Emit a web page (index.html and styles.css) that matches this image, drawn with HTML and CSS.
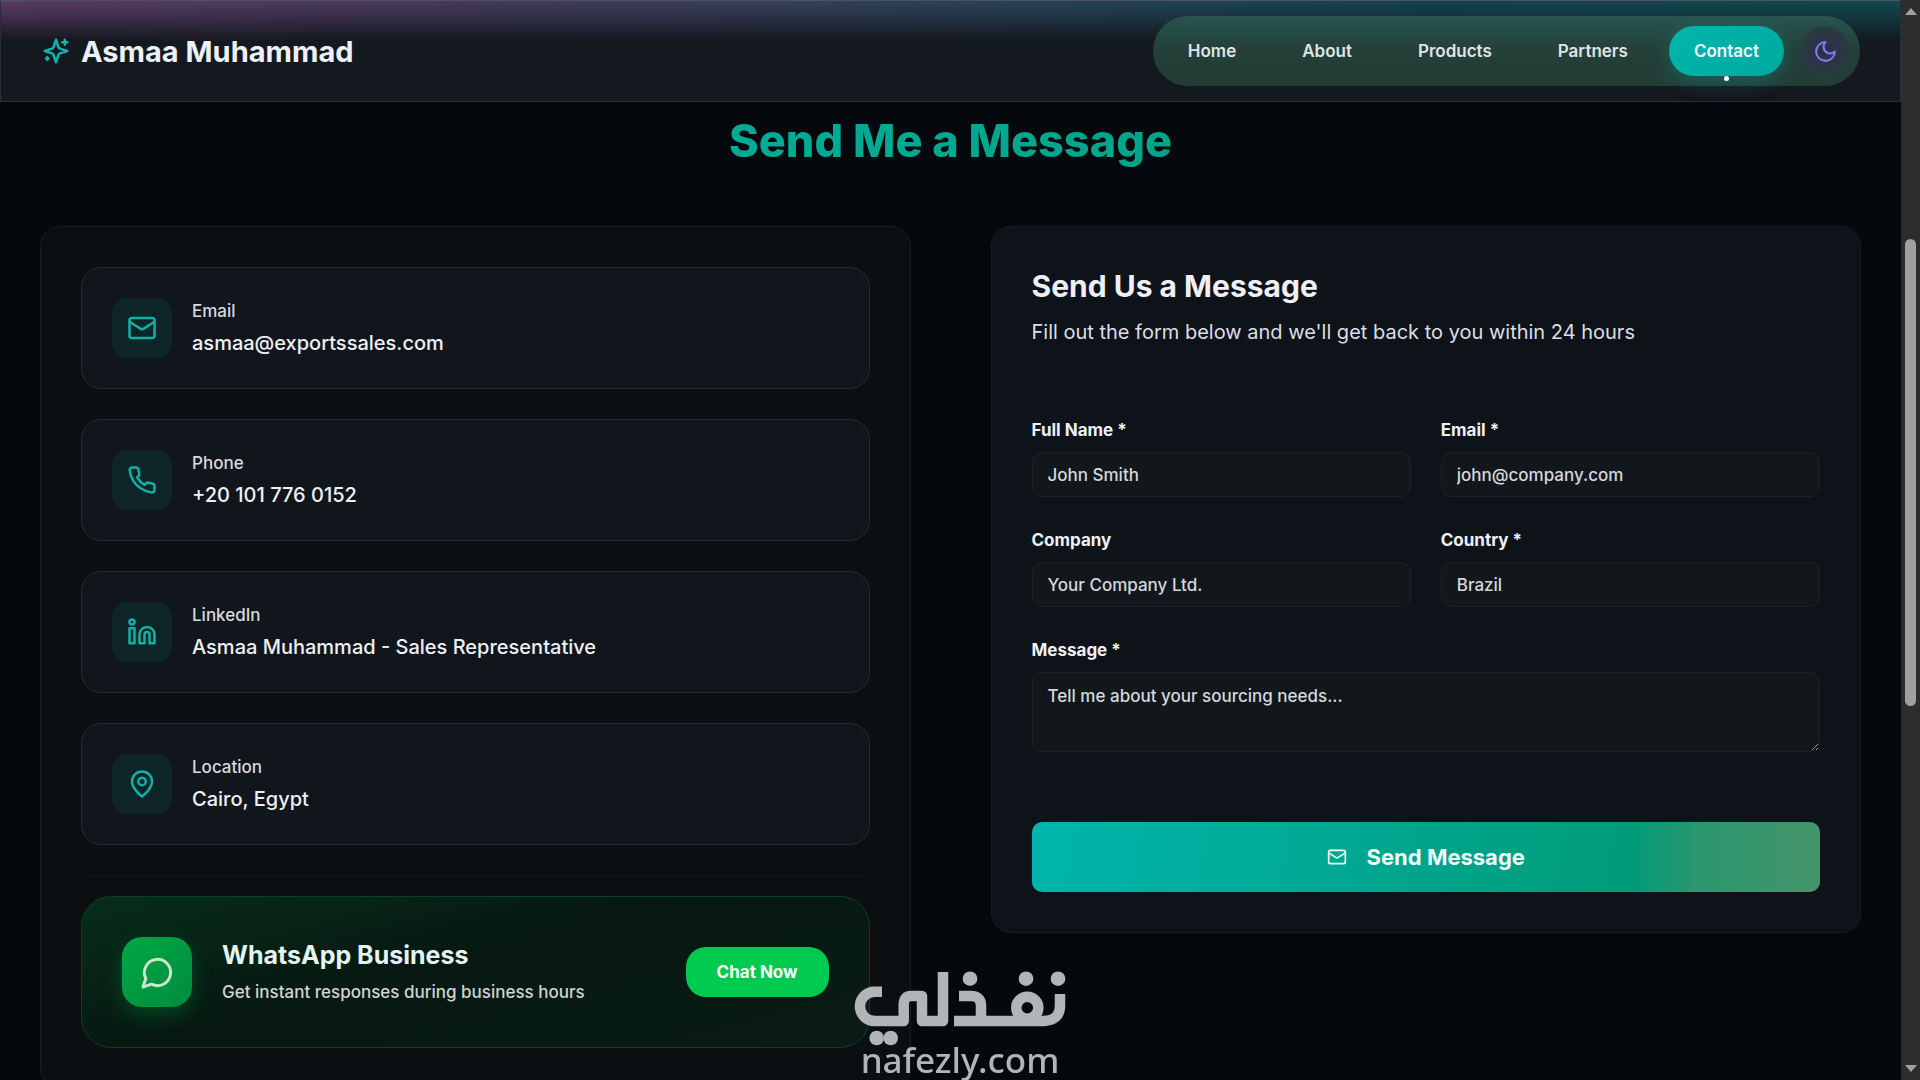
FILE: index.html
```html
<!DOCTYPE html>
<html lang="en">
<head>
	<meta charset="utf-8">
	<title>Asmaa Muhammad - Contact</title>
	<link rel="stylesheet" href="styles.css">
</head>
<body>

<div class="page">
	<header class="navbar">
		<a class="brand" href="#">
			<svg class="icon" viewBox="0 0 24 24"><path d="M12 3l-1.9 5.8a2 2 0 0 1-1.3 1.3L3 12l5.8 1.9a2 2 0 0 1 1.3 1.3L12 21l1.9-5.8a2 2 0 0 1 1.3-1.3L21 12l-5.8-1.9a2 2 0 0 1-1.3-1.3L12 3Z"/><path d="M19 3v4M21 5h-4M5 17v2M6 18H4"/></svg>
			Asmaa Muhammad
		</a>
		<nav class="navLinks">
			<a href="#home">Home</a>
			<a href="#about">About</a>
			<a href="#products">Products</a>
			<a href="#partners">Partners</a>
			<a href="#contact" class="active">Contact</a>
			<button class="themeBtn" type="button" aria-label="Toggle theme">
				<svg class="icon" viewBox="0 0 24 24"><path d="M12 3a6 6 0 0 0 9 9 9 9 0 1 1-9-9Z"/></svg>
			</button>
		</nav>
	</header>

	<main>
		<h1>Send Me a Message</h1>

		<div class="contactGrid">
			<section class="panel infoPanel">
				<a class="infoCard" href="mailto:asmaa@exportssales.com">
					<span class="infoIcon"><svg class="icon" viewBox="0 0 24 24"><rect x="2" y="4" width="20" height="16" rx="2"/><path d="m22 7-8.97 5.7a1.94 1.94 0 0 1-2.06 0L2 7"/></svg></span>
					<span class="infoText"><span class="infoLabel">Email</span><span class="infoValue">asmaa@exportssales.com</span></span>
				</a>
				<a class="infoCard" href="tel:+201017760152">
					<span class="infoIcon"><svg class="icon" viewBox="0 0 24 24"><path d="M22 16.92v3a2 2 0 0 1-2.18 2 19.79 19.79 0 0 1-8.63-3.07 19.5 19.5 0 0 1-6-6 19.79 19.79 0 0 1-3.07-8.67A2 2 0 0 1 4.11 2h3a2 2 0 0 1 2 1.72 12.84 12.84 0 0 0 .7 2.81 2 2 0 0 1-.45 2.11L8.09 9.91a16 16 0 0 0 6 6l1.27-1.27a2 2 0 0 1 2.11-.45 12.84 12.84 0 0 0 2.81.7A2 2 0 0 1 22 16.92z"/></svg></span>
					<span class="infoText"><span class="infoLabel">Phone</span><span class="infoValue">+20 101 776 0152</span></span>
				</a>
				<a class="infoCard" href="#linkedin">
					<span class="infoIcon"><svg class="icon" viewBox="0 0 24 24"><path d="M16 8a6 6 0 0 1 6 6v7h-4v-7a2 2 0 0 0-2-2 2 2 0 0 0-2 2v7h-4v-7a6 6 0 0 1 6-6z"/><rect x="2" y="9" width="4" height="12"/><circle cx="4" cy="4" r="2"/></svg></span>
					<span class="infoText"><span class="infoLabel">LinkedIn</span><span class="infoValue">Asmaa Muhammad - Sales Representative</span></span>
				</a>
				<div class="infoCard">
					<span class="infoIcon"><svg class="icon" viewBox="0 0 24 24"><path d="M20 10c0 6-8 12-8 12s-8-6-8-12a8 8 0 0 1 16 0Z"/><circle cx="12" cy="10" r="3"/></svg></span>
					<span class="infoText"><span class="infoLabel">Location</span><span class="infoValue">Cairo, Egypt</span></span>
				</div>

				<div class="whatsapp">
					<span class="waIcon"><svg class="icon" viewBox="0 0 24 24"><path d="M7.9 20A9 9 0 1 0 4 16.1L2 22Z"/></svg></span>
					<div class="waText">
						<h3>WhatsApp Business</h3>
						<p>Get instant responses during business hours</p>
					</div>
					<button class="chatBtn" type="button">Chat Now</button>
				</div>
			</section>

			<form class="panel formPanel">
				<h2>Send Us a Message</h2>
				<p class="formIntro">Fill out the form below and we'll get back to you within 24 hours</p>
				<div class="fields">
					<div class="field">
						<label for="fullName">Full Name *</label>
						<input type="text" id="fullName" placeholder="John Smith">
					</div>
					<div class="field">
						<label for="email">Email *</label>
						<input type="email" id="email" placeholder="john@company.com">
					</div>
					<div class="field">
						<label for="company">Company</label>
						<input type="text" id="company" placeholder="Your Company Ltd.">
					</div>
					<div class="field">
						<label for="country">Country *</label>
						<input type="text" id="country" placeholder="Brazil">
					</div>
					<div class="field wide">
						<label for="message">Message *</label>
						<textarea id="message" placeholder="Tell me about your sourcing needs..."></textarea>
					</div>
				</div>
				<button class="sendBtn" type="submit">
					<svg class="icon" viewBox="0 0 24 24"><rect x="2" y="4" width="20" height="16" rx="2"/><path d="m22 7-8.97 5.7a1.94 1.94 0 0 1-2.06 0L2 7"/></svg>
					Send Message
				</button>
			</form>
		</div>
	</main>
</div>

<div class="scrollTrack">
	<span class="arrowUp"></span>
	<span class="thumb"></span>
	<span class="arrowDown"></span>
</div>

<!-- nafezly logo over the bottom of the page -->
<div class="watermark">
	<svg viewBox="0 0 214 77" role="img" aria-label="nafezly">
		<g fill="none" stroke-width="10.5" stroke-linejoin="round">
			<path d="M29 20.7H21.6A14.6 14.6 0 0 0 21.6 50H50.7V34Q50.7 25 58 25H69V50H90V1"/>
			<path d="M106 25H118Q128 25 128 35V50"/>
			<path d="M101 50H191Q207 49 207 35V23"/>
			<circle cx="174.3" cy="36.7" r="11"/>
		</g>
		<g stroke="none">
			<circle cx="117" cy="7.7" r="7.3"/><circle cx="173" cy="7.7" r="7.3"/><circle cx="205" cy="7.7" r="7.3"/>
			<circle cx="23.7" cy="67" r="7.3"/><circle cx="37.7" cy="67" r="7.3"/>
		</g>
	</svg>
	<span>nafezly.com</span>
</div>

</body>
</html>
```
FILE: styles.css
```css
* {
	box-sizing: border-box;
}

body {
	margin: 0;
	height: 100vh;
	display: flex;
	overflow: hidden;
	background: #05090d;
	color: #eef0f6;
	font-family: Inter, "Liberation Sans", sans-serif;
	font-size: 17px;
}

a {
	color: inherit;
	text-decoration: none;
}

button, input, textarea {
	font-family: inherit;
}

h1, h2, h3, p {
	margin: 0;
}

.icon {
	fill: none;
	stroke: currentColor;
	stroke-width: 2;
	stroke-linecap: round;
	stroke-linejoin: round;
}

.page {
	flex: 1;
	min-width: 0;
}

/* Header */
.navbar {
	display: flex;
	justify-content: space-between;
	align-items: center;
	height: 102px;
	padding: 0 40px;
	border: 1px solid #2a2e36;
	border-top-color: #4f5166;
	background:
		linear-gradient(to bottom, rgba(20, 24, 32, 0) 0, rgba(20, 24, 32, 0.3) 14px, #14181f 40px),
		linear-gradient(to right, #593a63, #4a3a5c 20%, #2c4257 50%, #12424e 75%, #10484b);
}

.brand {
	display: flex;
	align-items: center;
	gap: 10px;
	font-size: 29px;
	font-weight: 700;
}

.brand .icon {
	width: 30px;
	height: 30px;
	color: #0fb5a8;
}

.navLinks {
	display: flex;
	align-items: center;
	gap: 16px;
	padding: 10px;
	border-radius: 35px;
	background: linear-gradient(to bottom, #28544f, #233f38 50%, #233d36);
	color: #dfe5e6;
	font-size: 17px;
	font-weight: 600;
}

.navLinks a {
	position: relative;
	padding: 0 25px;
	border-radius: 25px;
	line-height: 50px;
}

.navLinks .active {
	background: linear-gradient(135deg, #00b5ad, #00a99e);
	box-shadow: 0 5px 20px rgba(0, 181, 173, 0.3);
	color: #eefcfa;
}

.navLinks .active::after {
	content: "";
	position: absolute;
	left: 50%;
	bottom: -5px;
	width: 5px;
	height: 5px;
	margin-left: -2px;
	border-radius: 50%;
	background: #fff;
}

.themeBtn {
	display: flex;
	align-items: center;
	justify-content: center;
	width: 50px;
	height: 50px;
	border: none;
	border-radius: 50%;
	background: radial-gradient(closest-side, #2c3148 20%, #2b3645 70%, #263e3e 100%);
	color: #8179f5;
}

.themeBtn .icon {
	width: 25px;
	height: 25px;
}

main {
	padding: 9px 40px;
}

h1 {
	color: #00a58b;
	background: linear-gradient(135deg, #00b5ad, #009b72);
	background-clip: text;
	-webkit-text-fill-color: transparent;
	font-size: 45px;
	line-height: 60px;
	font-weight: 800;
	text-align: center;
}

/* Two columns */
.contactGrid {
	display: grid;
	grid-template-columns: 1fr 1fr;
	align-items: start;
	gap: 80px;
	margin-top: 55px;
}

.panel {
	padding: 40px;
	border: 1px solid #171d20;
	border-radius: 20px;
}

.infoPanel {
	background: #0b0f12;
}

.infoCard {
	display: flex;
	align-items: center;
	gap: 20px;
	height: 122px;
	margin-bottom: 30px;
	padding: 0 30px;
	border: 1px solid #262d31;
	border-radius: 20px;
	background: #11151c;
}

.infoIcon {
	display: flex;
	align-items: center;
	justify-content: center;
	width: 60px;
	height: 60px;
	border-radius: 15px;
	background: #0d2529;
	color: #10b0a5;
}

.infoIcon .icon {
	width: 30px;
	height: 30px;
}

.infoText {
	display: flex;
	flex-direction: column;
	gap: 4px;
	padding-bottom: 2px;
}

.infoLabel {
	font-size: 17px;
	line-height: 28px;
	font-weight: 500;
	color: #d8dade;
}

.infoValue {
	font-size: 20px;
	line-height: 28px;
	font-weight: 500;
}

.whatsapp {
	display: flex;
	align-items: center;
	gap: 30px;
	position: relative;
	height: 152px;
	margin-top: 51px;
	padding: 0 40px;
	border: 1px solid #0a402b;
	border-radius: 30px;
	background: linear-gradient(165deg, #082d1b 0%, #061811 45%, #0b1c17 100%);
}

/* Divider above the whatsapp box */
.whatsapp::before {
	content: "";
	position: absolute;
	left: 0;
	right: 0;
	top: -22px;
	border-top: 1px solid #11161a;
}

.waIcon {
	display: flex;
	align-items: center;
	justify-content: center;
	width: 70px;
	height: 70px;
	border-radius: 20px;
	background: linear-gradient(135deg, #00a846, #008c3c);
	box-shadow: 0 8px 20px rgba(0, 168, 70, 0.3);
	color: #c9e8cf;
}

.waIcon .icon {
	width: 35px;
	height: 35px;
}

.waText {
	flex: 1;
}

.waText h3 {
	font-size: 25px;
	line-height: 35px;
	font-weight: 700;
	color: #e4f4f0;
}

.waText p {
	margin-top: 5px;
	font-size: 17px;
	line-height: 28px;
	font-weight: 500;
	color: #ced5d3;
}

.chatBtn {
	height: 50px;
	padding: 0 31px;
	border: none;
	border-radius: 20px;
	background: #00c950;
	color: #fff;
	font-size: 17px;
	font-weight: 700;
}

/* Form */
.formPanel {
	background: #0e131a;
}

.formPanel h2 {
	font-size: 30px;
	line-height: 38px;
	font-weight: 700;
}

.formIntro {
	margin-top: 12px;
	font-size: 20px;
	line-height: 30px;
	color: #dcdfe4;
}

.fields {
	display: grid;
	grid-template-columns: 1fr 1fr;
	gap: 30px;
	margin-top: 70px;
}

.field {
	display: flex;
	flex-direction: column;
	gap: 8px;
}

.wide {
	grid-column: 1 / -1;
}

.field label {
	font-size: 17px;
	line-height: 27px;
	font-weight: 700;
}

.field input,
.field textarea {
	width: 100%;
	height: 45px;
	padding: 0 15px;
	border: 1px solid #1c2226;
	border-radius: 10px;
	background: #12171c;
	color: #d4d7dc;
	font-size: 17px;
	font-weight: 500;
}

.field textarea {
	height: 80px;
	padding: 10px 15px;
	line-height: 26px;
	resize: vertical;
}

.field ::placeholder {
	color: #d4d7dc;
}

.sendBtn {
	display: flex;
	align-items: center;
	justify-content: center;
	gap: 20px;
	width: 100%;
	height: 70px;
	margin-top: 70px;
	border: none;
	border-radius: 10px;
	background: linear-gradient(to right, rgba(68, 148, 105, 0) 76%, rgba(68, 148, 105, 0.6) 84%, #449469 100%), linear-gradient(100deg, #00b5ad, #009b78 77%);
	color: #effcf8;
	font-size: 22px;
	font-weight: 700;
}

.sendBtn .icon {
	width: 20px;
	height: 20px;
}

/* Scrollbar */
.scrollTrack {
	display: flex;
	flex-direction: column;
	align-items: center;
	justify-content: space-between;
	width: 19px;
	padding: 8px 0;
	background: #2c2c2c;
}

.arrowUp,
.arrowDown {
	border: 6px solid transparent;
}

.arrowUp {
	border-top: none;
	border-bottom: 7px solid #a0a0a0;
}

.arrowDown {
	border-bottom: none;
	border-top: 7px solid #a0a0a0;
}

.thumb {
	width: 11px;
	height: 467px;
	margin-bottom: 135px;
	border-radius: 6px;
	background: #a0a0a0;
}

/* Watermark */
.watermark {
	position: fixed;
	left: 50%;
	bottom: 4px;
	width: 214px;
	margin-left: -107px;
	color: #b2b5b7;
	font-family: "Noto Sans", sans-serif;
	font-size: 35px;
	line-height: 32px;
	font-weight: 500;
	text-align: center;
}

.watermark svg {
	display: block;
	width: 100%;
	margin-bottom: -4px;
	fill: #b2b5b7;
	stroke: #b2b5b7;
}
```
